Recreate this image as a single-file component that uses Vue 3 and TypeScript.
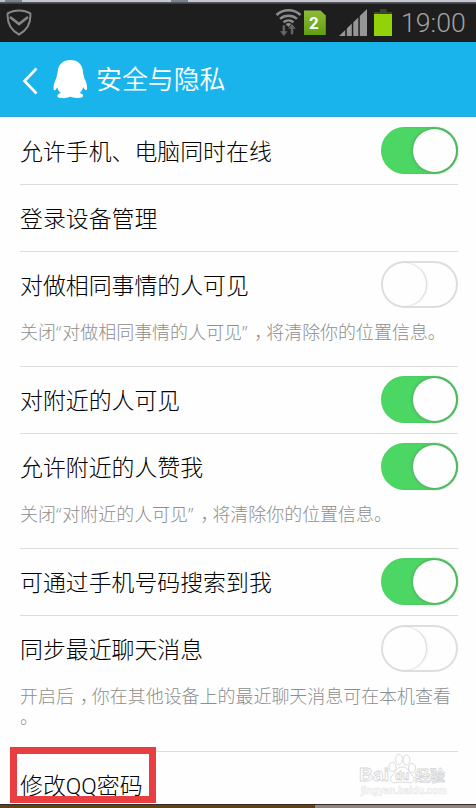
<script setup lang="ts">
import { ref } from 'vue'

interface Setting {
  label: string
  on?: boolean
  help?: string
  marked?: boolean
}

const settings = ref<Setting[]>([
  { label: '允许手机、电脑同时在线', on: true },
  { label: '登录设备管理' },
  { label: '对做相同事情的人可见', on: false, help: '关闭“对做相同事情的人可见”，将清除你的位置信息。' },
  { label: '对附近的人可见', on: true },
  { label: '允许附近的人赞我', on: true, help: '关闭“对附近的人可见”，将清除你的位置信息。' },
  { label: '可通过手机号码搜索到我', on: true },
  { label: '同步最近聊天消息', on: false, help: '开启后，你在其他设备上的最近聊天消息可在本机查看。' },
  { label: '修改QQ密码', marked: true },
])

// Punctuation gets its own spans so that its width and position can be tuned.
const pieces = (text: string): string[] => text.split(/([“”，])/).filter(Boolean)
const pieceClass = (p: string): string =>
  p === '，' ? 'comma' : p === '“' || p === '”' ? 'quote' : ''

function toggle(s: Setting) {
  s.on = !s.on
}
</script>

<template>
  <div class="screen">
    <div class="top-edge"></div>
    <div class="status">
      <svg class="shield" width="26" height="28" viewBox="0 0 26 28">
        <path d="M13 1.5C9.5 1.5 5 2.3 1.7 4.3C1 13 4.2 21 13 25.5C21.8 21 25 13 24.3 4.3C21 2.3 16.5 1.5 13 1.5Z" />
        <path d="M4 8L13 15L22 8" class="check" />
      </svg>
      <div class="indicators">
        <svg width="126" height="34" viewBox="275 4 126 34">
          <g class="wifi">
            <path d="M276.500 15C283.500 8.700 293.500 8.700 300.500 15" />
            <path d="M280 18.800C284.500 14.600 292.500 14.600 297 18.800" />
            <path d="M283.500 22.300C286.500 19.800 290.500 19.800 293.500 22.300" />
          </g>
          <path d="M285.500 24Q288.500 22 291.500 24L288.500 27Z" fill="#8c8c8c" />
          <path d="M282.300 25h3v6h2.700L283.800 36.500 279.600 31h2.700zM290.500 34.500h3v-5.500h2.700L292 23.500l-4.200 5.500h2.700z" fill="#666" stroke="#1e1e1e" stroke-width=".6" />
          <path d="M304 10.500h16.500l5.300 5V35H304z" fill="url(#sim)" />
          <text x="314" y="29" text-anchor="middle" class="sim-number">2</text>
          <path d="M339 36L345.200 30V36zM346.800 36V28.500L351.800 23.600V36zM353.300 36V22.200L358.300 17.400V36zM359.800 36V16L367 9V36z" fill="#969696" />
          <path d="M380 9h6.500v3h5.500v3h-18v-3h6z" fill="#41432f" />
          <path d="M374 14h18v22h-18z" fill="#92d208" />
          <defs>
            <linearGradient id="sim" x1="0" y1="0" x2="0" y2="1">
              <stop offset="0" stop-color="#8ebb38" />
              <stop offset="1" stop-color="#5e9f10" />
            </linearGradient>
          </defs>
        </svg>
        <span class="clock">19:00</span>
      </div>
    </div>

    <header class="header">
      <svg class="back" width="16" height="28" viewBox="0 0 16 28">
        <path d="M14.500 1.500L2.500 14L14.500 26.500" />
      </svg>
      <svg class="penguin" width="35" height="39" viewBox="0 0 35 39">
        <path d="M17.300 0C10 0 5 4.500 4.700 12C4.600 13.200 4.200 14.500 3.800 15.800C4 17.500 2.500 19.500 1.500 22.500C.4 26 .2 29.500 1.300 30.300C2.400 30.500 3.500 28.500 4.300 27.200C5 30 6.300 31.500 8 33C5.800 33.700 4.300 34.500 4.300 36C4.300 39 15.500 38.500 17.200 36.600C19.500 38.500 30.200 38.800 30.200 35.800C30.200 34.300 28.500 33.500 26.700 33C28.500 31.200 29.700 29.500 30.200 27.200C31.200 28.700 32.300 30.500 33.300 30.300C34.500 29.500 34.200 26 33.200 22.500C32.300 19.600 30.400 17.500 30.800 15.800C30.400 14.600 30 13.200 30 12C29.700 4.500 25 0 17.300 0Z" />
      </svg>
      <h1>安全与隐私</h1>
    </header>

    <main class="list">
      <section v-for="s in settings" :key="s.label" class="item">
        <div class="row">
          <span class="label">{{ s.label }}</span>
          <button
            v-if="s.on !== undefined"
            type="button"
            class="switch"
            :class="{ on: s.on }"
            @click="toggle(s)"
          >
            <span class="knob"></span>
          </button>
        </div>
        <p v-if="s.help" class="help"><span v-for="(p, i) in pieces(s.help)" :key="i" :class="pieceClass(p)">{{ p }}</span></p>
        <div v-if="s.marked" class="marker"></div>
      </section>
    </main>

    <svg class="watermark" width="96" height="48" viewBox="0 0 96 48">
      <g class="paw">
        <ellipse cx="38.500" cy="14" rx="3.500" ry="4.500" />
        <ellipse cx="45" cy="6.500" rx="3.500" ry="5" />
        <ellipse cx="52.500" cy="7" rx="3.500" ry="5" />
        <ellipse cx="58" cy="15" rx="3.500" ry="4.500" />
        <path d="M48 14C43 14 42 19 38.500 22C34 27 38 31 43 29.500C47 29 50 29 54 29.500C60 31 62 26 58 22C54.500 19 54 14 48 14Z" />
      </g>
      <text x="5" y="28" class="logo" textLength="30" lengthAdjust="spacingAndGlyphs">Bai</text>
      <text x="41" y="27" class="logo du" textLength="14" lengthAdjust="spacingAndGlyphs">du</text>
      <text x="61" y="28" class="logo cn">经验</text>
      <text x="7" y="41" class="site" textLength="86" lengthAdjust="spacingAndGlyphs">jingyan.baidu.com</text>
    </svg>
    <div class="bottom-edge"></div>
  </div>
</template>

<style>
html,
body {
  margin: 0;
  overflow: hidden;
}
</style>

<style scoped>
.screen {
  position: relative;
  display: flex;
  flex-direction: column;
  width: 476px;
  height: 808px;
  overflow: hidden;
  background: #fefefe;
  font-family: Roboto, "Noto Sans CJK SC", sans-serif;
  font-weight: 300;
}

.top-edge {
  flex: none;
  height: 2px;
  background: linear-gradient(90deg, #b9bfc5 0 5px, #758594 5px 22px, #c5c8ce 22px 171px, #758594 171px 188px, #c5c8ce 188px);
  border-bottom: 1px solid #55565a;
}

.status {
  flex: none;
  display: flex;
  justify-content: space-between;
  height: 39px;
  background: #1e1e1e;
  border-top: 1px solid #414244;
  box-sizing: border-box;
}

.shield {
  margin: 5px 0 0 6px;
  fill: none;
  stroke: #858585;
  stroke-width: 2;
}

.shield .check {
  stroke-width: 2.6;
}

.indicators {
  display: flex;
  width: 201px;
}

.indicators svg {
  flex: none;
}

.wifi {
  fill: none;
  stroke: #8c8c8c;
  stroke-width: 2.5;
}

.sim-number {
  fill: #fff;
  font: 700 17px Roboto, sans-serif;
}

.clock {
  color: #a2a2a2;
  font-size: 26.7px;
  line-height: 38px;
  white-space: nowrap;
}

.header {
  flex: none;
  display: flex;
  align-items: center;
  height: 75px;
  padding-left: 22px;
  box-sizing: border-box;
  background: #1ab4ed;
  border-bottom: 1px solid #2ca6d4;
}

.back {
  margin-top: 3px;
  fill: none;
  stroke: #fff;
  stroke-width: 2.6;
}

.penguin {
  margin: 0 0 0 15px;
  fill: #fff;
}

h1 {
  margin: 2px 0 0 8px;
  color: #fff;
  font-size: 25.9px;
  line-height: 38px;
  font-weight: 350;
}

.list {
  flex: 1;
  padding-top: 1px;
}

.item {
  position: relative;
  margin: 0 18px 0 20px;
  border-bottom: 1px solid #dcdcdc;
}

.item:last-child {
  border-bottom: 0;
}

.row {
  display: flex;
  align-items: center;
  justify-content: space-between;
  height: 66px;
}

.label {
  margin-top: 4px;
  color: #000;
  font-size: 22.9px;
  line-height: 34px;
  white-space: nowrap;
}

.switch {
  display: flex;
  justify-content: flex-start;
  width: 77px;
  height: 47px;
  margin: -2px 0 0;
  padding: 2px;
  box-sizing: border-box;
  border: 0;
  border-radius: 24px;
  background: #fefefe;
  box-shadow: inset 0 0 0 2px #dedede;
}

.switch.on {
  justify-content: flex-end;
  background: #4cd764;
  box-shadow: inset -1px 0 2px #55ae66;
}

.knob {
  width: 43px;
  height: 43px;
  border-radius: 50%;
  background: #fefefe;
  box-shadow: 1px 0 2px #cfcfcf;
}

.on .knob {
  box-shadow: 0 0 3px 1px #50ac60;
}

.help {
  margin: 0;
  height: 48px;
  padding-top: 4px;
  box-sizing: border-box;
  color: #8e8e8e;
  font-size: 17.97px;
  line-height: 21px;
  line-break: anywhere;
}

.item:nth-child(7) .help {
  height: 69px;
}

.comma {
  margin-left: 6px;
  letter-spacing: -6px;
}

.quote {
  font-family: "Open Sans", sans-serif;
  letter-spacing: 1px;
}

.marker {
  position: absolute;
  top: -5px;
  left: -10px;
  width: 146px;
  height: 56px;
  box-sizing: border-box;
  border: 7px solid #e83e42;
}

.watermark {
  position: absolute;
  left: 354px;
  top: 753px;
  overflow: visible;
}

.paw {
  fill: #fefefe;
  stroke: #dcdcdc;
}

.logo {
  fill: #fefefe;
  stroke: #d6d6d6;
  stroke-width: 0.8;
  font: 700 19px "Liberation Sans", sans-serif;
}

.du {
  font-size: 13px;
}

.cn {
  font: 700 15px "Noto Sans CJK SC", sans-serif;
}

.site {
  fill: #fefefe;
  stroke: #e6e6e6;
  stroke-width: 0.6;
  font: 700 11px "Liberation Sans", sans-serif;
}

.bottom-edge {
  position: absolute;
  left: 0;
  right: 0;
  bottom: 0;
  height: 3px;
  background: linear-gradient(90deg, #654014 0 79px, #654014 315px, #91877f 315px);
  border-top: 1px solid #302b27;
}
</style>
